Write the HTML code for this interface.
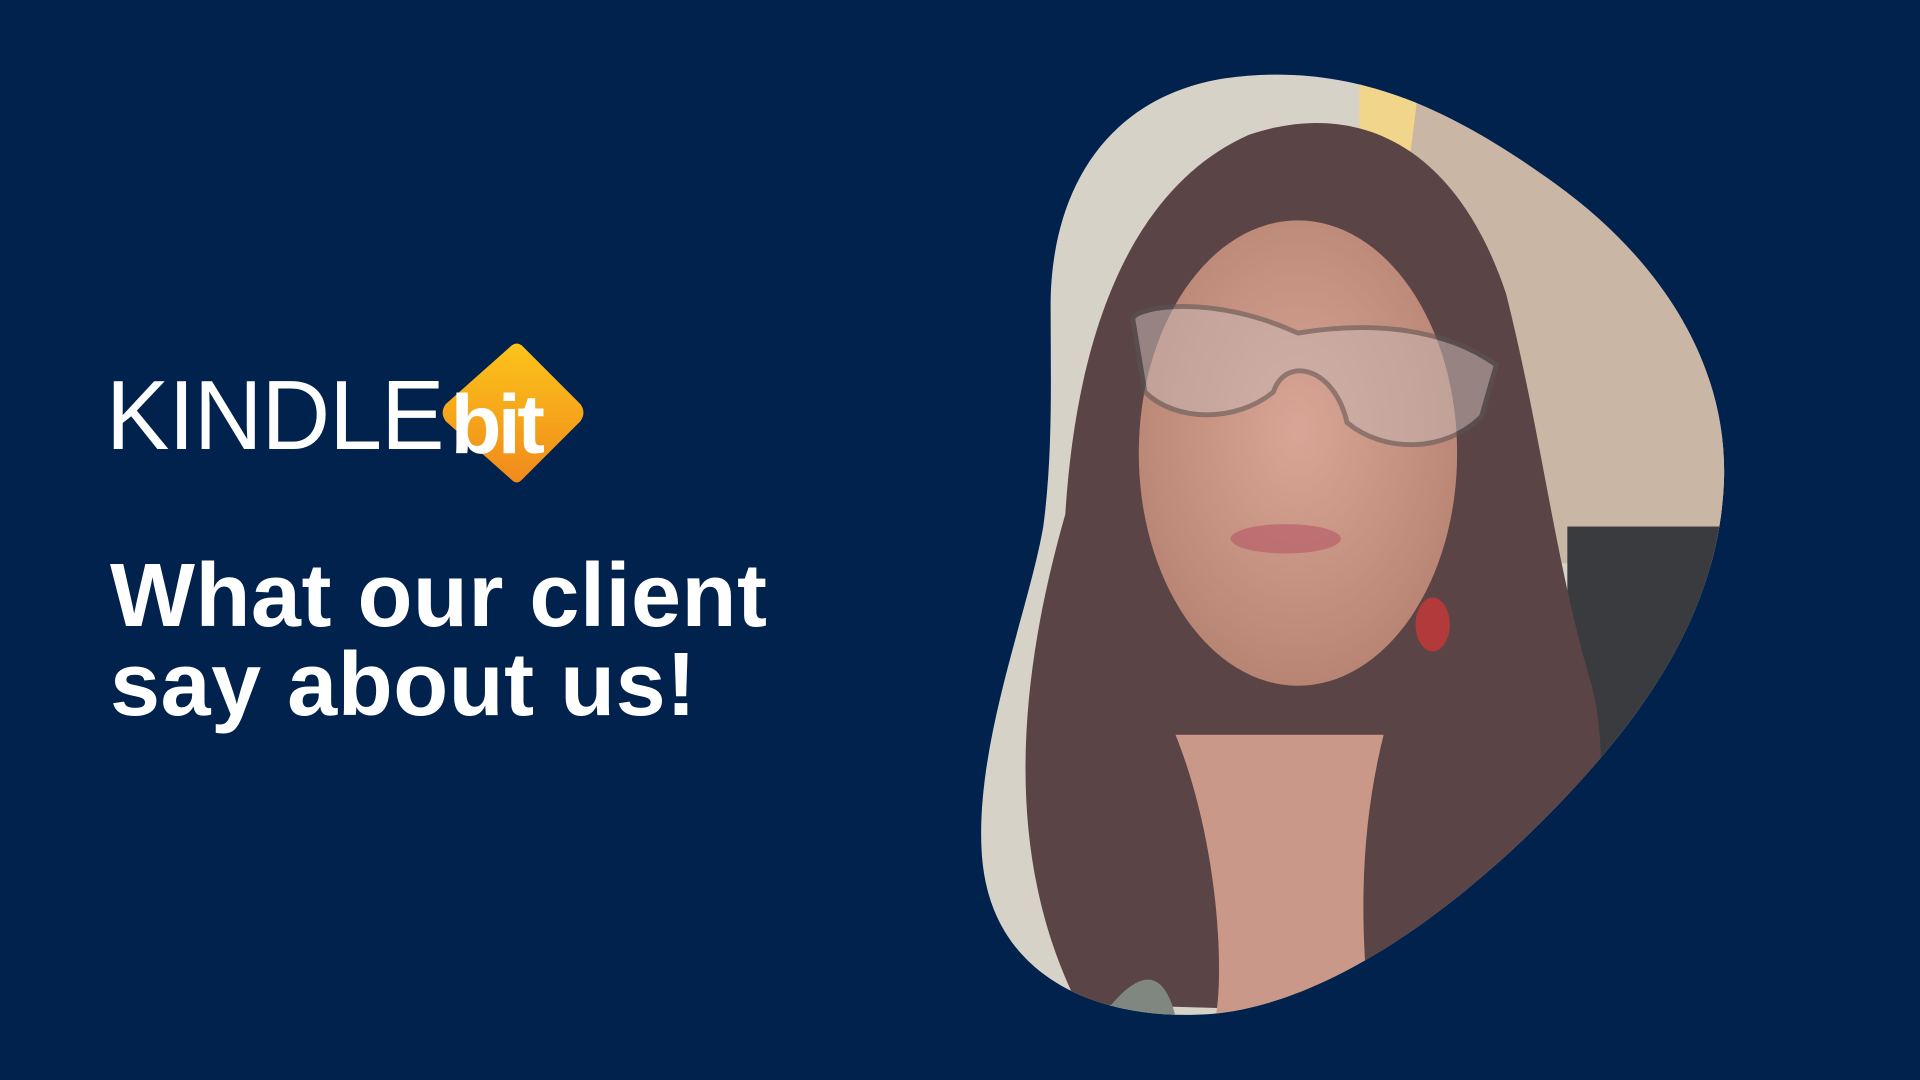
<!DOCTYPE html>
<html><head><meta charset="utf-8"><style>
html,body{margin:0;padding:0;}
body{width:1920px;height:1080px;background:#01224d;position:relative;overflow:hidden;font-family:"Liberation Sans",sans-serif;}
.kindle{position:absolute;left:106px;top:366px;font-size:98px;font-weight:400;color:#fff;letter-spacing:-1px;line-height:1;transform:scaleX(0.97);transform-origin:left;}
.h{position:absolute;left:110px;top:552px;color:#fff;font-weight:700;font-size:90px;line-height:89px;letter-spacing:0.5px;}
svg{position:absolute;left:0;top:0;}
</style></head><body>
<svg width="1920" height="1080" viewBox="0 0 1568 882">
<defs>
<clipPath id="b"><path d="M858,250 C858,160 900,80 1000,64 C1100,50 1180,85 1270,150 C1360,215 1410,300 1408,390 C1405,500 1340,590 1260,670 C1180,750 1080,820 990,828 C900,835 810,800 802,700 C795,610 840,500 852,430 C860,370 858,310 858,250 Z"/></clipPath>
<linearGradient id="o" x1="0" y1="0" x2="0" y2="1"><stop offset="0" stop-color="#fcc419"/><stop offset="1" stop-color="#f08a1c"/></linearGradient>
<radialGradient id="f" cx="0.5" cy="0.45" r="0.55"><stop offset="0" stop-color="#d9a596"/><stop offset="1" stop-color="#b88473"/></radialGradient>
</defs>
<g clip-path="url(#b)">
<rect x="790" y="40" width="640" height="800" fill="#d6d2c8"/>
<rect x="1150" y="40" width="280" height="420" fill="#c9b6a4"/>
<rect x="1280" y="430" width="150" height="260" fill="#3a3b3e"/>
<path d="M1110,60 L1160,60 L1150,140 L1110,130Z" fill="#f0d58a"/>
<path d="M880,820 C820,700 830,560 870,420 C880,260 930,150 1020,110 C1110,80 1190,120 1230,240 C1260,360 1270,460 1300,560 C1320,640 1300,760 1240,830 Z" fill="#5a4446"/>
<path d="M960,600 C1000,700 1000,820 990,840 L1120,840 C1110,760 1110,680 1130,600 Z" fill="#c99888"/>
<ellipse cx="1060" cy="370" rx="130" ry="190" fill="url(#f)"/>
<path d="M925,260 C930,250 990,240 1060,272 C1120,262 1180,268 1222,298 L1210,340 C1180,370 1130,370 1100,345 C1090,300 1050,290 1040,320 C1010,345 960,345 935,320 Z" fill="#c8b8b4" opacity="0.55" stroke="#5a5656" stroke-width="4"/>
<ellipse cx="1050" cy="440" rx="45" ry="12" fill="#b8606a" opacity="0.7"/>
<path d="M900,830 C930,790 950,790 960,830Z" fill="#7f8780"/>
<ellipse cx="1170" cy="510" rx="14" ry="22" fill="#b33a3a"/>
</g>
<path d="M418,282 Q422,279 426,282 L474,330 Q479,337 474,344 L426,392 Q422,396 418,392 L364,344 Q359,337 364,330 Z" fill="url(#o)"/>
<text x="368" y="370" font-family="Liberation Sans" font-weight="700" font-size="68" fill="#fff" letter-spacing="-3">bit</text>
</svg>
<div class="kindle">KINDLE</div>
<div class="h">What our client<br>say about us!</div>
</body></html>
